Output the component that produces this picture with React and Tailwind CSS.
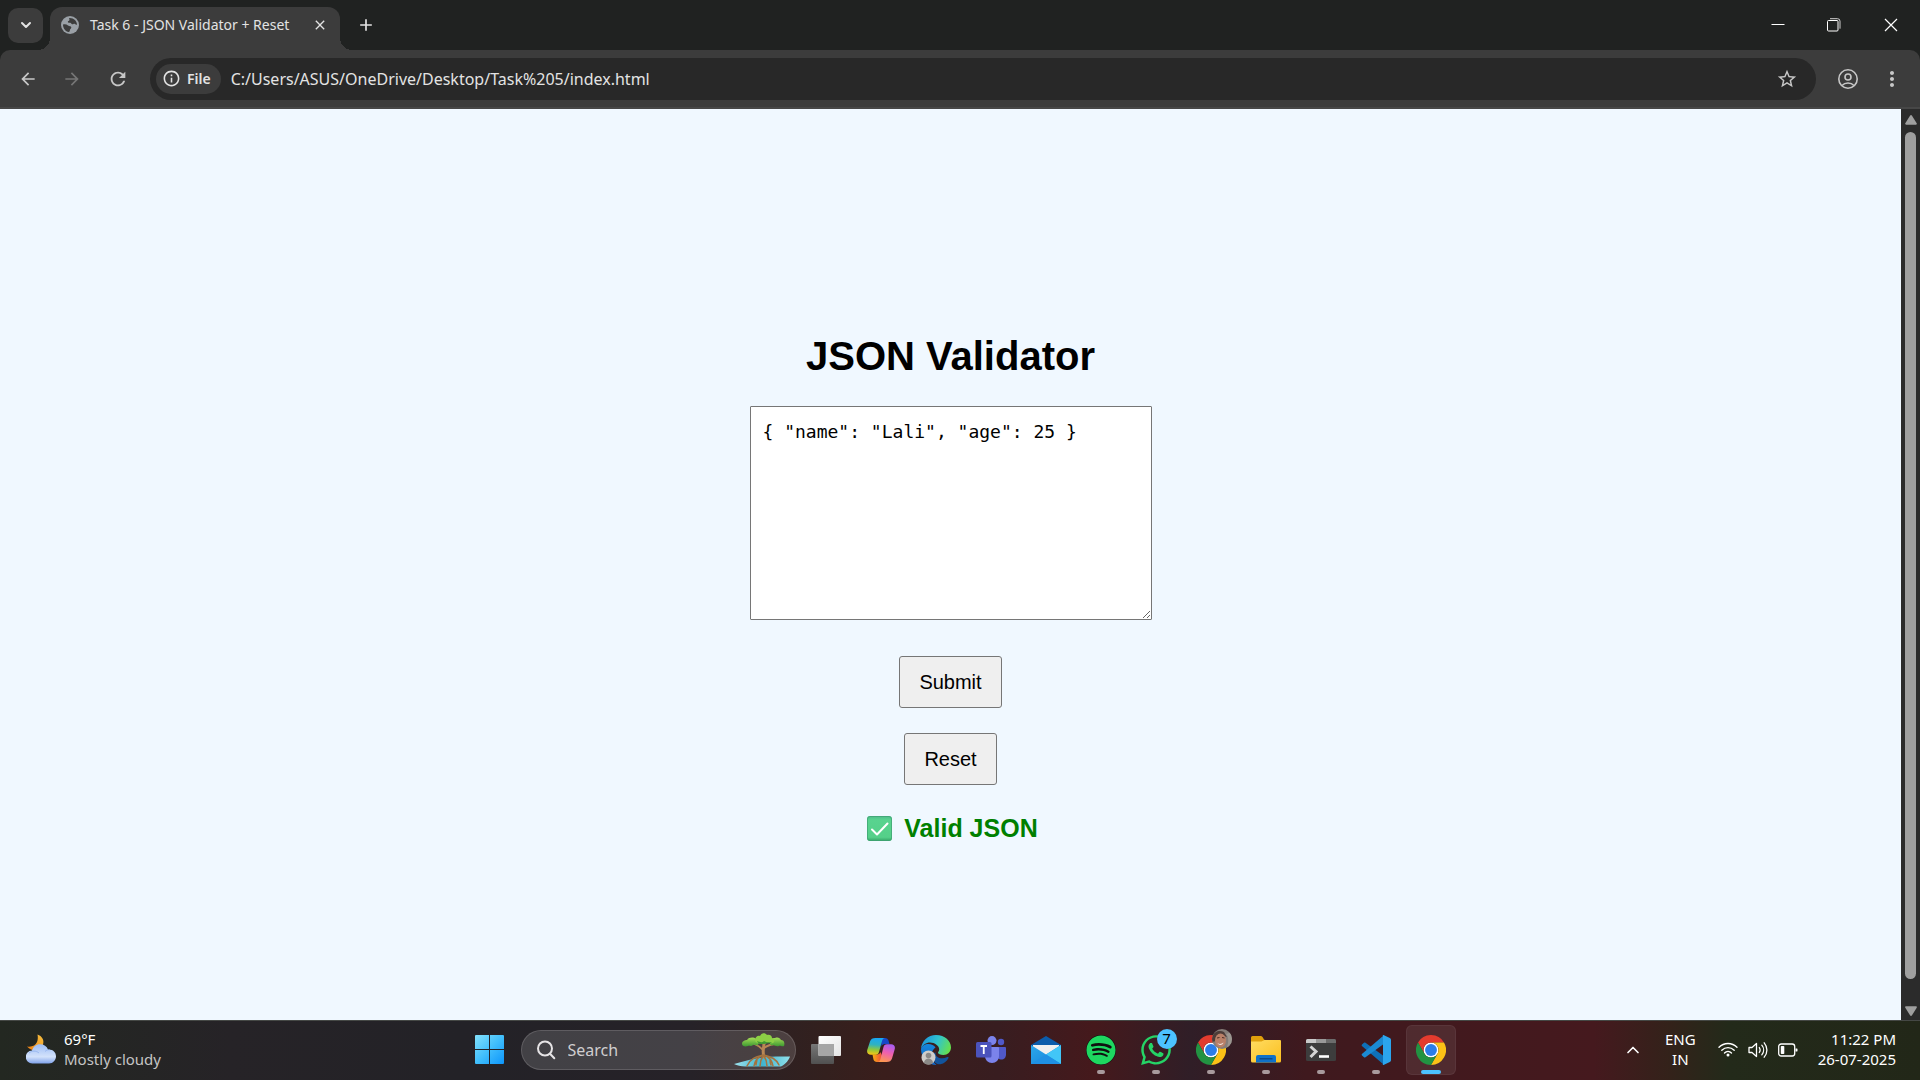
import { useState } from "react";
import {
  MdArrowBack,
  MdArrowForward,
  MdRefresh,
  MdInfoOutline,
  MdStarBorder,
  MdMoreVert,
  MdClose,
  MdAdd,
} from "react-icons/md";
import { FaWhatsapp, FaSpotify } from "react-icons/fa";
import { ChevronDown, ChevronUp } from "lucide-react";

const START_JSON = '{ "name": "Lali", "age": 25 }';

function GlobeIcon() {
  return (
    <svg viewBox="0 0 18 18" className="size-[18px] shrink-0" aria-hidden="true">
      <circle cx="9" cy="9" r="9" fill="#9aa0a6" />
      <path
        d="M2 8.6c1.8-.5 3.6-.3 5 .8 1.500 1.200 3 .4 3.300 1.800.2 1.300-1.300 1.500-1.400 2.900 0 1-.3 1.900-1.200 1.900C4.500 15.600 2 12.600 2 8.600z"
        fill="#3c3c3c"
      />
      <path
        d="M8.200 2.100c-.3 1 .6 1.300.2 2.200-.4.800-1.500.6-1.600 1.500-.1 1 1.300 1 2.400 1 1.100.1 1 1.300 2.100 1.500 1 .2 1.300-.8 2.200-.6 1 .2 1.100 1.300 2.500 1C15.900 5.200 12.800 1.800 8.200 2.100z"
        fill="#3c3c3c"
      />
    </svg>
  );
}

function ProfileIcon() {
  return (
    <svg viewBox="0 0 20 20" className="size-5" fill="none" stroke="#c7c7c7" strokeWidth="1.600" aria-hidden="true">
      <circle cx="10" cy="10" r="9.200" />
      <circle cx="10" cy="8" r="3" />
      <path d="M4 16.500c1.600-1.700 3.700-2.500 6-2.500s4.400.8 6 2.500" />
    </svg>
  );
}

function MinimizeIcon() {
  return (
    <svg viewBox="0 0 14 14" className="size-[14px]" aria-hidden="true">
      <path d="M.500 6.500h13" stroke="#fff" />
    </svg>
  );
}

function RestoreIcon() {
  return (
    <svg viewBox="0 0 14 14" className="size-[14px]" fill="none" stroke="#fff" aria-hidden="true">
      <rect x=".5" y="2.500" width="10.500" height="10.500" rx="1" />
      <path d="M3 .7h7.500a2.500 2.500 0 0 1 2.500 2.500v7.500" stroke="#d0d0d0" />
    </svg>
  );
}

function CloseWindowIcon() {
  return (
    <svg viewBox="0 0 14 14" className="size-[14px]" aria-hidden="true">
      <path d="M1 1l12 12M13 1L1 13" stroke="#fff" strokeWidth="1.200" />
    </svg>
  );
}

function CheckEmoji() {
  return (
    <svg viewBox="0 0 25 25" className="size-[25px]" aria-hidden="true">
      <defs>
        <linearGradient id="tick" x1="0" y1="0" x2="0" y2="1">
          <stop offset="0" stopColor="#4fb98a" />
          <stop offset=".15" stopColor="#58d38f" />
          <stop offset=".85" stopColor="#55d089" />
          <stop offset="1" stopColor="#35a468" />
        </linearGradient>
      </defs>
      <rect width="25" height="25" rx="3" fill="url(#tick)" />
      <rect x=".500" y=".500" width="24" height="24" rx="2.500" fill="none" stroke="#3f9f72" strokeOpacity=".7" />
      <path d="M5 13.500l5 5L20.500 7.500" fill="none" stroke="#fff" strokeWidth="2" strokeLinecap="round" strokeLinejoin="round" />
    </svg>
  );
}

function WeatherIcon() {
  return (
    <svg viewBox="0 0 30 30" className="size-[30px]" aria-hidden="true">
      <defs>
        <linearGradient id="moon" x1="1" y1="0" x2="0" y2="1">
          <stop offset="0" stopColor="#f5c242" />
          <stop offset="1" stopColor="#f07f12" />
        </linearGradient>
        <linearGradient id="cloud" x1="0" y1="0" x2="0" y2="1">
          <stop offset="0" stopColor="#9dbdf5" />
          <stop offset=".65" stopColor="#d3e2fb" />
          <stop offset="1" stopColor="#7fa2ea" />
        </linearGradient>
      </defs>
      <path d="M11.500.5C16 2 18.500 6 17 10.500 15 17 7 19 1 12.500c5 .8 8.500-1 10-4.500 1-2.500 1-5 .5-7.500z" fill="url(#moon)" />
      <path d="M6.500 29.500a6.500 6.500 0 0 1-.5-13c1.200-4 4-6.300 8-6.300s6.800 2 8 5.300c4.500-.5 8 2.500 8 6.800 0 4-3 7.200-7 7.200z" fill="url(#cloud)" />
      <path d="M3 19c3-2.500 7-2.500 10 0M19 17.500c1.500-1.500 3-2 5-1.800" fill="none" stroke="#83a6ea" strokeOpacity=".6" />
    </svg>
  );
}

function StartIcon() {
  return (
    <svg viewBox="0 0 29 29" className="size-[29px]" aria-hidden="true">
      <defs>
        <linearGradient id="win" gradientUnits="userSpaceOnUse" x1="0" y1="0" x2="29" y2="29">
          <stop offset="0" stopColor="#83e1fb" />
          <stop offset=".5" stopColor="#41bffc" />
          <stop offset="1" stopColor="#0d95fb" />
        </linearGradient>
      </defs>
      <path d="M1 0h13v14H0V1a1 1 0 0 1 1-1zM15 0h13a1 1 0 0 1 1 1v13H15zM0 15h14v14H1a1 1 0 0 1-1-1zM15 15h14v13a1 1 0 0 1-1 1H15z" fill="url(#win)" />
    </svg>
  );
}

function SearchIcon() {
  return (
    <svg viewBox="0 0 20 20" className="size-5 shrink-0" fill="none" stroke="#e6e4e6" strokeWidth="2" strokeLinecap="round" aria-hidden="true">
      <circle cx="9" cy="8.500" r="7" />
      <path d="M14 13.800l4.300 4.400" />
    </svg>
  );
}

function MangroveIcon() {
  return (
    <svg viewBox="0 0 58 34" className="h-[34px] w-[58px] shrink-0" aria-hidden="true">
      <defs>
        <linearGradient id="water" x1="0" y1="0" x2="1" y2="0">
          <stop offset="0" stopColor="#9fe4ee" />
          <stop offset=".5" stopColor="#3fb4cf" />
          <stop offset="1" stopColor="#8fdfe9" />
        </linearGradient>
        <linearGradient id="leaf" x1="0" y1="0" x2="0" y2="1">
          <stop offset="0" stopColor="#a4dc55" />
          <stop offset="1" stopColor="#3f9a32" />
        </linearGradient>
      </defs>
      <path d="M1 31c10-3 22-6.500 32-7 9-.6 17-.5 24-.5-1 3-4 7.500-9 10H12C8 33.500 4 32.500 1 31z" fill="url(#water)" />
      <g fill="none" stroke="#b98754" strokeLinecap="round">
        <path d="M31 10c0 5-2 8 0 14" strokeWidth="3" />
        <path d="M30 17c-4-5-7-5-11-7M31 15c4-3 8-4 13-4" strokeWidth="1.800" />
        <path d="M30 22c-8 2-13 4-16 11M30 22c-5 2-8 5-9 11M30 23c-2 3-3 5-3 10M31 23c2 3 3 5 3 10M31 22c5 2 8 5 9 11M31 22c8 2 12 4 15 10M24 26c0 2-1 4-1 6M37 26c0 2 0 4 1 6" stroke="#a5733f" strokeWidth="1.500" />
      </g>
      <path d="M9 11c0-3 3-4 5-4 2-3 7-3 9-1 3 1 3 4 2 6-2 1-3-1-5 0-2 2-4 0-5 1-3 1-6 0-6-2z" fill="url(#leaf)" />
      <path d="M37 10c0-3 2-5 5-5 3-1 5 0 6 2 3 0 4 3 3 6-2 1-4-1-5 0-3 1-4-1-6-1-2 1-3 0-3-2z" fill="url(#leaf)" />
      <path d="M22 7c0-3 3-5 5-4 1-3 5-4 7-1 3-1 5 1 5 3 3 1 3 4 1 5-3 1-4-1-6 0-2 1-4 0-5 0-3 1-7 0-7-3z" fill="#8ccf45" />
      <path d="M24 8c3 1 5 2 7 0 3 2 5 1 8 1-2 2-4 1-6 1.500-3 1-8 1-9-2.500z" fill="#3f9a32" />
    </svg>
  );
}

function TaskViewIcon() {
  return (
    <svg viewBox="0 0 30 30" className="size-[30px]" aria-hidden="true">
      <defs>
        <linearGradient id="pane" x1="0" y1="0" x2="1" y2="1">
          <stop offset="0" stopColor="#fff" />
          <stop offset="1" stopColor="#e4e4e4" />
        </linearGradient>
        <linearGradient id="paneBack" x1="0" y1="0" x2="0" y2="1">
          <stop offset="0" stopColor="#777" />
          <stop offset="1" stopColor="#505050" />
        </linearGradient>
      </defs>
      <rect x="0" y="9" width="23" height="20" rx="1" fill="url(#paneBack)" />
      <rect x="7.500" y="1" width="22.500" height="20" rx="1" fill="url(#pane)" />
      <path d="M7.500 9H23v12H8.500a1 1 0 0 1-1-1z" fill="#a6a6a6" />
    </svg>
  );
}

function CopilotIcon() {
  return (
    <svg viewBox="0 0 28 26" className="h-[26px] w-7" aria-hidden="true">
      <defs>
        <linearGradient id="copLeft" x1=".5" y1="0" x2=".4" y2="1">
          <stop offset="0" stopColor="#17a7f5" />
          <stop offset=".4" stopColor="#2fb2c0" />
          <stop offset=".7" stopColor="#8fc83c" />
          <stop offset="1" stopColor="#f8c515" />
        </linearGradient>
        <linearGradient id="copRight" x1=".6" y1="0" x2=".3" y2="1">
          <stop offset="0" stopColor="#a95df0" />
          <stop offset=".45" stopColor="#ee5fb0" />
          <stop offset="1" stopColor="#fd9a4c" />
        </linearGradient>
        <linearGradient id="copBottom" x1="0" y1="0" x2="1" y2="0">
          <stop offset="0" stopColor="#f9b012" />
          <stop offset="1" stopColor="#f0463c" />
        </linearGradient>
      </defs>
      <path d="M14 1h4c2 0 3 1 3.500 2.500L22.500 7H18c-2 0-3 1-3.500 2.500z" fill="#1747c8" />
      <path d="M14 25H10c-2 0-3-1-3.500-2.500L5.500 17.500H10c2 0 3-1 3.500-2.500l2 5z" fill="url(#copBottom)" />
      <path d="M8.500 1H18c-1.500 0-2.300 1-2.800 2.500L12 15c-.5 1.800-1.500 2.800-3.500 2.800H4c-3 0-4.500-2-3.700-5L3 4.500C3.800 2 5.500 1 8.500 1z" fill="url(#copLeft)" />
      <path d="M19.500 25H10.500c1.500 0 2.300-1 2.800-2.500L16.500 10c.5-1.800 1.500-2.800 3.500-2.800h4c3 0 4.500 2 3.700 5L25 21.500c-.8 2.500-2.500 3.500-5.500 3.500z" fill="url(#copRight)" />
    </svg>
  );
}

function EdgeIcon() {
  return (
    <svg viewBox="0 0 30 30" className="size-[30px]" aria-hidden="true">
      <defs>
        <linearGradient id="edgeTop" x1="0" y1=".3" x2="1" y2=".6">
          <stop offset="0" stopColor="#1c93dc" />
          <stop offset=".5" stopColor="#30c3cf" />
          <stop offset="1" stopColor="#66e04c" />
        </linearGradient>
        <linearGradient id="edgeLeft" x1="0" y1="0" x2="0" y2="1">
          <stop offset="0" stopColor="#1687dc" />
          <stop offset="1" stopColor="#0d62c4" />
        </linearGradient>
      </defs>
      <path d="M0 14c0 9 6.500 16 15.500 16C12 27 10.500 24 10.500 20.500c0-4 2-6.500 4-8C12 8 2 7 0 14z" fill="url(#edgeLeft)" />
      <path d="M10.500 19c0 6 4 11 9 10.300 3.500-.8 6.500-3 8-6.300.3-.8-.5-1.300-1.200-.9-5.800 2.900-12.300.4-11.800-4.600z" fill="#12549c" />
      <path d="M0 14C.5 6 7 0 15 0c9 0 15 6 15 12.500 0 4.500-3.500 7.500-7.500 7.500-3.500 0-5.500-1.200-5.500-2.300 0-.9 1.200-1.300 1.200-3.400C18.200 11 14 7.500 9 7.500c-4 0-7.500 2.500-9 6.500z" fill="url(#edgeTop)" />
      <circle cx="7.500" cy="22.500" r="7" fill="#cfcdca" />
      <circle cx="7.500" cy="20.500" r="2.800" fill="#8b8987" />
      <path d="M3 28c0-6 9-6 9 0-2.700 2-6.300 2-9 0z" fill="#8b8987" />
    </svg>
  );
}

function TeamsIcon() {
  return (
    <svg viewBox="0 0 30 28" className="h-7 w-[30px]" aria-hidden="true">
      <circle cx="25" cy="6" r="3.200" fill="#5059c9" />
      <path d="M20 11h9a1 1 0 0 1 1 1v6.500c0 3-2 5-4.500 5S20 21.500 20 18.500z" fill="#5059c9" />
      <circle cx="16" cy="4.600" r="4.500" fill="#7b83eb" />
      <path d="M9 11h13a1 1 0 0 1 1 1v8c0 4-3 7-7 7s-7-3-7-7z" fill="#7b83eb" />
      <rect x="0" y="6" width="15.500" height="15.500" rx="1.500" fill="#4b53bc" />
      <path d="M4.500 10h6.500M7.750 10v8" stroke="#fff" strokeWidth="1.800" fill="none" />
    </svg>
  );
}

function MailIcon() {
  return (
    <svg viewBox="0 0 30 28" className="h-7 w-[30px]" aria-hidden="true">
      <defs>
        <linearGradient id="mail" x1="0" y1="0" x2="1" y2="1">
          <stop offset="0" stopColor="#2ca7ea" />
          <stop offset="1" stopColor="#1583dc" />
        </linearGradient>
      </defs>
      <path d="M15 0l15 9v4H0V9z" fill="#0b5cab" />
      <path d="M2 9h26v10H2z" fill="#efefef" />
      <path d="M0 9l15 9.500L30 9v19H0z" fill="url(#mail)" />
      <path d="M30 9v19L15 18.500z" fill="#42c6f7" />
      <path d="M0 28l15-9.500L30 28z" fill="#1f90e4" />
    </svg>
  );
}

function ChromeIcon() {
  return (
    <svg viewBox="0 0 48 48" className="size-[30px]" aria-hidden="true">
      <circle cx="24" cy="24" r="12" fill="#fff" />
      <path d="M24 12h20.780a23.990 23.990 0 0 0-41.560 0L13.610 30A11.990 11.990 0 0 1 24 12z" fill="#e33b2e" />
      <path d="M34.390 30L24 48a23.990 23.990 0 0 0 20.780-36H24a11.990 11.990 0 0 1 10.390 18z" fill="#fbc116" />
      <path d="M13.610 30L3.220 12A23.990 23.990 0 0 0 24 48l10.390-18a11.990 11.990 0 0 1-20.780 0z" fill="#229342" />
      <circle cx="24" cy="24" r="9.500" fill="#2b7de9" />
    </svg>
  );
}

function AvatarBadge() {
  return (
    <svg viewBox="0 0 20 20" className="absolute top-1 right-1 size-5" aria-hidden="true">
      <defs>
        <clipPath id="face">
          <circle cx="10" cy="10" r="10" />
        </clipPath>
      </defs>
      <g clipPath="url(#face)">
        <rect width="20" height="20" fill="#857d78" />
        <path d="M0 8C2 2 8 1 12 3l3 5-6-2-5 6-4 1z" fill="#4d3c38" />
        <ellipse cx="8.500" cy="11.500" rx="5.500" ry="7" fill="#b98068" />
        <path d="M5 9l2.500-.5M10 8.500l2.500.5" stroke="#4a2c24" />
        <path d="M5.500 14c2 1.500 4 1 6-.5-.5 3-4.500 3.500-6 .5z" fill="#f0e2dc" />
        <path d="M14 5c3 3 3 9 0 15h6V3z" fill="#9b9690" />
      </g>
    </svg>
  );
}

function ExplorerIcon() {
  return (
    <svg viewBox="0 0 30 27" className="h-[27px] w-[30px]" aria-hidden="true">
      <defs>
        <linearGradient id="folder" x1="0" y1="0" x2="1" y2="1">
          <stop offset="0" stopColor="#ffdc62" />
          <stop offset="1" stopColor="#fbbf1e" />
        </linearGradient>
      </defs>
      <path d="M0 8V1.500A1.500 1.500 0 0 1 1.500 0H10c2 0 2.500 4 4 4v4z" fill="#e0a00c" />
      <path d="M0 5.500h10.500L13.500 4H29a1 1 0 0 1 1 1v20a1.500 1.500 0 0 1-1.500 1.500h-27A1.500 1.500 0 0 1 0 25z" fill="url(#folder)" />
      <path d="M5 26.500V21a2 2 0 0 1 2-2h16a2 2 0 0 1 2 2v5.500z" fill="#0f71c9" />
      <path d="M8.500 22.800h13" stroke="#0a417e" strokeWidth="1.200" />
    </svg>
  );
}

function TerminalIcon() {
  return (
    <svg viewBox="0 0 30 22" className="h-[22px] w-[30px]" aria-hidden="true">
      <rect width="30" height="22" rx="1.500" fill="#3d3d3d" />
      <path d="M1.500 0H10v4H0V1.500A1.500 1.500 0 0 1 1.500 0z" fill="#c9c9c9" />
      <path d="M10 0h10v4H10z" fill="#999" />
      <path d="M20 0h8.500A1.500 1.500 0 0 1 30 1.500V4H20z" fill="#6c6c6c" />
      <path d="M4.500 7.500l5.500 5-5.500 5.500" fill="none" stroke="#d5d5d5" strokeWidth="3" />
      <path d="M13 17.500h10" stroke="#fff" strokeWidth="2.600" />
    </svg>
  );
}

function CodeIcon() {
  return (
    <svg viewBox="0 0 30 30" className="size-[30px]" aria-hidden="true">
      <path d="M1 9.500l2-1.800c.5-.4 1-.4 1.500 0L22 20.500V29L.9 11c-.4-.5-.4-1 .1-1.500z" fill="#0e70b8" />
      <path d="M1 20.500l2 1.800c.5.400 1 .400 1.500 0L22 9.500V1L.9 19c-.4.500-.4 1 .1 1.500z" fill="#1b8ad3" />
      <path d="M22.500 0l6.300 2.900c.8.400 1.200 1 1.200 1.800v20.600c0 .8-.4 1.400-1.200 1.800L22.500 30c-.9.400-1.500.200-2.100-.4.900.8 1.600.2 1.600-.7V1.100c0-.9-.7-1.500-1.600-.7.600-.6 1.200-.8 2.100-.4z" fill="#2ba5ee" />
    </svg>
  );
}

function WifiIcon() {
  return (
    <svg viewBox="0 0 20 15" className="h-[15px] w-5" fill="none" stroke="#fff" strokeWidth="1.400" strokeLinecap="round" aria-hidden="true">
      <path d="M1 5.300c5-5 13-5 18 0M3.800 8.200c3.500-3.500 8.900-3.500 12.400 0M6.500 11c2-2 5-2 7 0" />
      <circle cx="10" cy="13" r="1.500" fill="#fff" stroke="none" />
    </svg>
  );
}

function VolumeIcon() {
  return (
    <svg viewBox="0 0 20 18" className="h-[18px] w-5" fill="none" stroke="#fff" strokeWidth="1.300" strokeLinecap="round" strokeLinejoin="round" aria-hidden="true">
      <path d="M1 6.500h3L8.500 2.500v13L4 11.500H1z" />
      <path d="M11.300 6.500c1 1.500 1 3.500 0 5M13.800 4.200c2.400 2.800 2.400 6.800 0 9.600M16.200 1.800c3.600 4.200 3.600 10.200 0 14.400" />
    </svg>
  );
}

function BatteryIcon() {
  return (
    <svg viewBox="0 0 20 14" className="h-[14px] w-5" fill="none" stroke="#fff" strokeWidth="1.300" aria-hidden="true">
      <rect x=".7" y="1" width="16" height="12" rx="2.500" />
      <rect x="2.800" y="3" width="3.500" height="8" rx=".8" fill="#fff" stroke="none" />
      <path d="M17.500 5.500h1.200c.8 0 .8.500.8 1.500s0 1.500-.8 1.500h-1.200z" fill="#fff" stroke="none" />
    </svg>
  );
}

const apps = [
  { name: "Task view", icon: <TaskViewIcon /> },
  { name: "Copilot", icon: <CopilotIcon /> },
  { name: "Edge", icon: <EdgeIcon /> },
  { name: "Teams", icon: <TeamsIcon /> },
  { name: "Mail", icon: <MailIcon /> },
  { name: "Spotify", icon: <FaSpotify className="size-[30px] rounded-full bg-[#101010] text-[#1ed760]" />, open: true },
  { name: "WhatsApp", icon: <FaWhatsapp className="size-[34px] text-[#25d366]" />, open: true, badge: "7" },
  { name: "Chrome profile", icon: <ChromeIcon />, open: true, avatar: true },
  { name: "File Explorer", icon: <ExplorerIcon />, open: true },
  { name: "Terminal", icon: <TerminalIcon />, open: true },
  { name: "Visual Studio Code", icon: <CodeIcon />, open: true },
  { name: "Chrome", icon: <ChromeIcon />, active: true },
];

function TaskbarApp({ app }) {
  return (
    <button
      type="button"
      aria-label={app.name}
      className={
        app.active
          ? "relative grid size-[50px] place-items-center rounded-md border border-white/5 bg-white/8"
          : "relative grid size-[50px] place-items-center rounded-md"
      }
    >
      {app.icon}
      {app.avatar && <AvatarBadge />}
      {app.badge && (
        <span className="absolute top-1 right-1 grid size-5 place-items-center rounded-full bg-[#4cc2ff] text-[15px] leading-none text-black">
          {app.badge}
        </span>
      )}
      {app.open && <span className="absolute bottom-px h-1 w-2 rounded-full bg-[#a89a9d]" />}
      {app.active && <span className="absolute bottom-0 h-1 w-5 rounded-full bg-[#4cc2ff]" />}
    </button>
  );
}

function TabStrip() {
  return (
    <div className="flex h-[50px] items-center bg-[#202221] pl-2 text-[#e3e3e3]">
      <button type="button" aria-label="Search tabs" className="grid size-[35px] place-items-center rounded-[10px] bg-[#3c3c3c]">
        <ChevronDown className="size-4" strokeWidth={3} />
      </button>
      <div className="relative ml-[7px] flex h-[43px] w-[290px] items-center self-end rounded-t-xl bg-[#3c3c3c] pr-2 pb-[7px] pl-[11px] before:absolute before:bottom-0 before:-left-3 before:size-3 before:bg-[radial-gradient(circle_at_0_0,transparent_12px,#3c3c3c_12px)] after:absolute after:-right-3 after:bottom-0 after:size-3 after:bg-[radial-gradient(circle_at_100%_0,transparent_12px,#3c3c3c_12px)]">
        <GlobeIcon />
        <span className="ml-[11px] flex-1 text-sm whitespace-nowrap">Task 6 - JSON Validator + Reset</span>
        <button type="button" aria-label="Close tab" className="grid size-6 place-items-center">
          <MdClose className="size-4" />
        </button>
      </div>
      <button type="button" aria-label="New tab" className="ml-[14px] grid size-6 place-items-center">
        <MdAdd className="size-5" />
      </button>
      <div className="ml-auto flex items-center">
        <button type="button" aria-label="Minimize" className="grid h-12 w-14 place-items-center">
          <MinimizeIcon />
        </button>
        <button type="button" aria-label="Restore" className="grid h-12 w-14 place-items-center">
          <RestoreIcon />
        </button>
        <button type="button" aria-label="Close" className="grid h-12 w-[58px] place-items-center">
          <CloseWindowIcon />
        </button>
      </div>
    </div>
  );
}

function Toolbar() {
  return (
    <div className="bg-[#202221]">
      <div className="flex h-[59px] items-center rounded-t-[10px] border-b-2 border-[#474747] bg-[#3c3c3c] px-4 text-[#c7c7c7]">
        <button type="button" aria-label="Back" className="grid size-6 place-items-center">
          <MdArrowBack className="size-5" />
        </button>
        <button type="button" aria-label="Forward" className="ml-5 grid size-6 place-items-center text-[#757575]">
          <MdArrowForward className="size-5" />
        </button>
        <button type="button" aria-label="Reload" className="ml-[22px] grid size-6 place-items-center">
          <MdRefresh className="size-[22px]" />
        </button>
        <div className="ml-5 flex h-[42px] flex-1 items-center rounded-full bg-[#282828] pr-[18px] pl-1.5">
          <button type="button" className="flex h-[30px] items-center gap-1.5 rounded-full bg-[#3c3c3c] pr-2.5 pl-1.5 text-sm font-semibold text-[#e3e3e3]">
            <MdInfoOutline className="size-[19px]" />
            File
          </button>
          <input
            aria-label="Address"
            defaultValue="C:/Users/ASUS/OneDrive/Desktop/Task%205/index.html"
            className="ml-[10px] min-w-0 flex-1 bg-transparent text-base text-[#e3e3e3] outline-none"
          />
          <button type="button" aria-label="Bookmark this page">
            <MdStarBorder className="size-[22px]" />
          </button>
        </div>
        <button type="button" aria-label="Profile" className="ml-[22px]">
          <ProfileIcon />
        </button>
        <button type="button" aria-label="Menu" className="ml-[22px]">
          <MdMoreVert className="size-6" />
        </button>
      </div>
    </div>
  );
}

function Scrollbar() {
  return (
    <div className="flex w-[19px] flex-col items-center gap-[7px] bg-[#2b2b2b] pt-1.5 pb-1 text-[#9f9f9f]">
      <svg viewBox="0 0 12 10" className="h-[10px] w-3" fill="currentColor" aria-hidden="true">
        <path d="M5 .7c.5-.8 1.500-.8 2 0l4.700 7.500c.4.700 0 1.500-.8 1.500H1.100c-.8 0-1.200-.8-.8-1.500z" />
      </svg>
      <div className="mb-5 w-[11px] flex-1 rounded-full bg-[#9f9f9f]" />
      <svg viewBox="0 0 12 10" className="h-[10px] w-3" fill="currentColor" aria-hidden="true">
        <path d="M5 9.300c.5.800 1.500.8 2 0l4.700-7.500c.4-.7 0-1.500-.8-1.500H1.100c-.8 0-1.200.8-.8 1.500z" />
      </svg>
    </div>
  );
}

function Validator() {
  const [text, setText] = useState(START_JSON);
  const [result, setResult] = useState("valid");

  function submit(event) {
    event.preventDefault();
    try {
      JSON.parse(text);
      setResult("valid");
    } catch {
      setResult("invalid");
    }
  }

  function reset() {
    setText("");
    setResult("");
  }

  return (
    <main className="flex flex-1 flex-col items-center justify-center bg-[#f0f8ff] pt-[46px] font-['Liberation_Sans',Arial,sans-serif] text-black">
      <h1 className="text-[40px] leading-[46px] font-bold">JSON Validator</h1>
      <form onSubmit={submit} className="mt-[27px] flex flex-col items-center">
        <textarea
          aria-label="JSON"
          value={text}
          onChange={(event) => setText(event.target.value)}
          spellCheck={false}
          className="h-[214px] w-[402px] rounded-[1px] border border-[#767676] bg-white px-3 py-[13px] font-['DejaVu_Sans_Mono',Consolas,monospace] text-[18px] leading-[23px] outline-none"
        />
        <button type="submit" className="mt-9 rounded-[3px] border border-[#767676] bg-[#efefef] px-[19px] py-[13px] text-[20px] leading-6">
          Submit
        </button>
        <button type="button" onClick={reset} className="mt-[25px] rounded-[3px] border border-[#767676] bg-[#efefef] px-[19px] py-[13px] text-[20px] leading-6">
          Reset
        </button>
      </form>
      <output className="mt-[29px] flex h-7 items-center gap-3 pl-1 text-[25px] leading-7 font-bold text-[#008000]">
        {result === "valid" && (
          <>
            <CheckEmoji />
            Valid JSON
          </>
        )}
        {result === "invalid" && "Invalid JSON"}
      </output>
    </main>
  );
}

function Taskbar() {
  return (
    <footer className="grid h-[60px] grid-cols-[1fr_auto_1fr] items-center border-t border-[#454845] bg-[linear-gradient(90deg,#232821_0%,#262327_12%,#232227_24%,#262228_36%,#33201e_43%,#3a1e1c_46%,#381d20_52%,#45191c_57%,#301e27_62%,#3f191e_68%,#45191e_83%,#33221a_87%,#232a1a_90%,#222718_100%)] pb-0.5 text-white">
      <button type="button" className="flex items-center gap-2 justify-self-start pb-0.5 pl-[26px] text-left text-[15px] leading-5">
        <WeatherIcon />
        <span className="flex flex-col">
          <span>69°F</span>
          <span className="text-[#c4c4c4]">Mostly cloudy</span>
        </span>
      </button>
      <nav aria-label="Apps" className="flex items-center gap-[5px]">
        <button type="button" aria-label="Start" className="mr-px grid size-[50px] place-items-center">
          <StartIcon />
        </button>
        <label className="flex h-10 w-[275px] items-center rounded-full border border-white/15 bg-white/14 pr-1 pl-[14px]">
          <SearchIcon />
          <input type="text" aria-label="Search" placeholder="Search" className="ml-3 min-w-0 flex-1 bg-transparent text-base outline-none placeholder:text-[#d0ced0]" />
          <MangroveIcon />
        </label>
        {apps.map((app) => (
          <TaskbarApp key={app.name} app={app} />
        ))}
      </nav>
      <div className="flex items-center justify-self-end pr-6 text-[15px] leading-5">
        <button type="button" aria-label="Show hidden icons">
          <ChevronUp className="size-5" />
        </button>
        <button type="button" className="ml-[22px] flex flex-col items-center pb-0.5">
          <span>ENG</span>
          <span>IN</span>
        </button>
        <button type="button" aria-label="Network, volume and battery" className="ml-[22px] flex items-center gap-2.5">
          <WifiIcon />
          <VolumeIcon />
          <BatteryIcon />
        </button>
        <button type="button" className="ml-5 flex flex-col items-end pb-0.5">
          <time>11:22 PM</time>
          <time>26-07-2025</time>
        </button>
      </div>
    </footer>
  );
}

export default function App() {
  return (
    <div className="flex min-h-screen flex-col font-['Noto_Sans','Segoe_UI',sans-serif]">
      <header>
        <TabStrip />
        <Toolbar />
      </header>
      <div className="flex flex-1">
        <Validator />
        <Scrollbar />
      </div>
      <Taskbar />
    </div>
  );
}
